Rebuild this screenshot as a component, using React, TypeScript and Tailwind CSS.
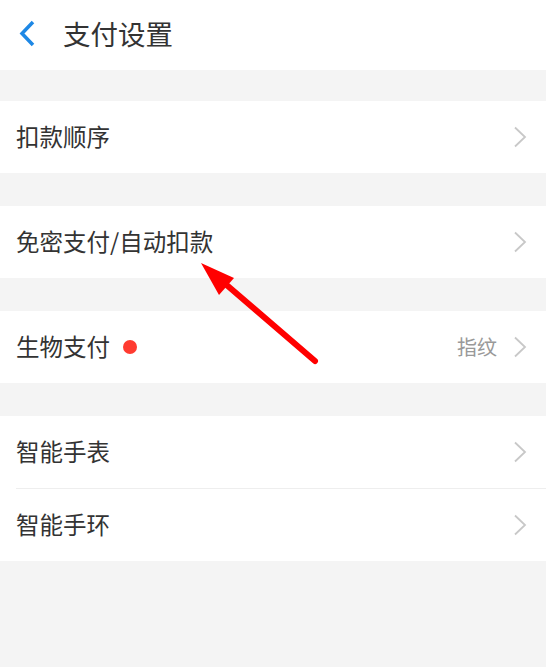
import React from "react";

const font = { fontFamily: '"Noto Sans CJK SC", "Noto Sans", sans-serif' };

function Chevron() {
  return (
    <svg width="14" height="22" viewBox="0 0 14 22" className="shrink-0">
      <path d="M2 1.5 L12 11 L2 20.5" fill="none" stroke="#c8c8c8" strokeWidth="1.8" />
    </svg>
  );
}

interface RowProps {
  label: string;
  dot?: boolean;
  value?: string;
  divider?: boolean;
}

function Row({ label, dot, value, divider }: RowProps) {
  return (
    <div className="bg-white">
      <div className="flex h-[72px] items-center pl-[16px] pr-[19px]">
        <span className="text-[23.5px] text-[#333333]">{label}</span>
        {dot && <span className="ml-[13px] size-[14px] rounded-full bg-[#ff3b30]" />}
        <div className="flex-1" />
        {value && <span className="mr-[16px] text-[20px] text-[#999999]">{value}</span>}
        <Chevron />
      </div>
      {divider && <div className="ml-[16px] h-px bg-[#eeeeee]" />}
    </div>
  );
}

export default function App() {
  return (
    <div className="relative min-h-[667px] w-[546px] bg-[#f4f4f4]" style={font}>
      <div className="flex h-[70px] items-center bg-white pb-[3px]">
        <svg width="22" height="30" viewBox="0 0 22 30" className="ml-[17px]">
          <path d="M16 3 L5 14.5 L16 26" fill="none" stroke="#1e88e5" strokeWidth="3.5" />
        </svg>
        <span className="ml-[24px] text-[27.5px] leading-none text-[#333333]">支付设置</span>
      </div>

      <div className="flex flex-col gap-[33px] pt-[31px]">
        <Row label="扣款顺序" />
        <Row label="免密支付/自动扣款" />
        <Row label="生物支付" dot value="指纹" />
        <div>
          <Row label="智能手表" divider />
          <Row label="智能手环" />
        </div>
      </div>

      <svg
        className="pointer-events-none absolute left-0 top-0"
        width="546"
        height="667"
        viewBox="0 0 546 667"
      >
        <line x1="315" y1="361" x2="222" y2="281" stroke="#ff0000" strokeWidth="6" strokeLinecap="round" />
        <polygon points="201,263 234,278 219,295" fill="#ff0000" />
      </svg>
    </div>
  );
}
